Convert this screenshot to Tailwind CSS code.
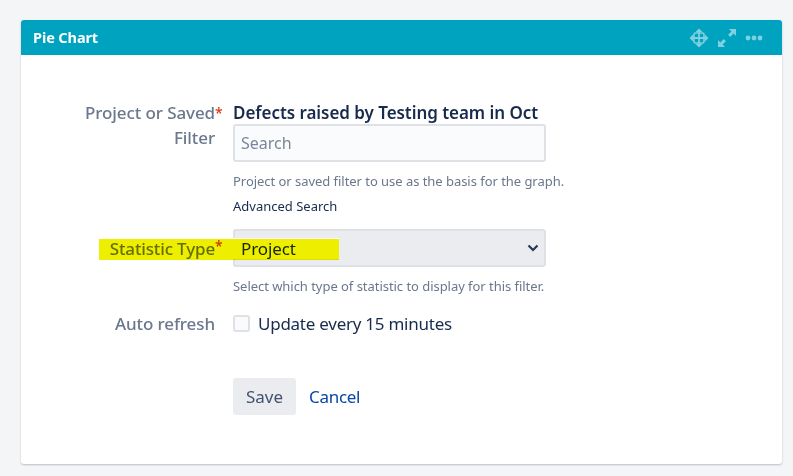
<!DOCTYPE html>
<html><head><meta charset="utf-8"><script src="https://cdn.jsdelivr.net/npm/@tailwindcss/browser@4"></script></head>
<body class="bg-[#f4f5f7] w-[793px] h-[476px] overflow-hidden relative font-['Noto_Sans',sans-serif]">
<div class="pt-5 pl-[21px] w-[782px]">
<div class="bg-white rounded-[3px] h-[444px] shadow-[0_1px_2px_rgba(9,30,66,0.25)]">
<div class="h-[35px] bg-[#00a3bf] rounded-t-[3px] flex items-center pl-3 pr-[19px] text-white">
<span class="text-[14.5px] font-bold tracking-[-0.1px]">Pie Chart</span>
<div class="ml-auto flex items-center gap-[8px] text-[#7fd1df]">
<svg width="20" height="20" viewBox="0 0 20 20" fill="none" stroke="currentColor" stroke-width="1.800"><path d="M10 3v14M3 10h14"/><path fill="currentColor" stroke="none" d="M10 0.500l3.500 3.500h-7zM10 19.500l3.500-3.500h-7zM0.500 10l3.500-3.500v7zM19.500 10l-3.500-3.500v7z"/><rect x="5" y="5" width="10" height="10" rx="1.500" stroke-width="1.600"/></svg>
<svg width="20" height="20" viewBox="0 0 20 20" fill="currentColor"><path d="M12 1h7v7l-2.400-2.400-3.300 3.300-2.200-2.200 3.300-3.300zM1 19v-7l2.400 2.400 3.300-3.300 2.200 2.200-3.300 3.300L8 19z"/></svg>
<svg width="18" height="6" viewBox="0 0 18 6" fill="currentColor"><circle cx="3" cy="3" r="2.400"/><circle cx="9" cy="3" r="2.400"/><circle cx="15" cy="3" r="2.400"/></svg>
</div>
</div>
<div class="pt-[46px] grid grid-cols-[194px_313px] gap-x-[18px] text-[17px] leading-[25px]">
<div class="-mt-[1px] text-right text-[#6b778c] font-medium tracking-[-0.1px]">Project or Saved<span class="text-[#de350b] absolute text-[14px]">*</span><br>Filter</div>
<div>
<div class="font-semibold text-[#172b4d] h-[24px] -mt-[1px] whitespace-nowrap tracking-[-0.05px]">Defects raised by Testing team in Oct</div>
<div class="h-[38px] border-2 border-[#dfe1e6] rounded-[3px] bg-[#fafbfc] flex items-center pl-[6px] text-[#7a869a] text-[16px]">Search</div>
<p class="mt-[9px] text-[13px] leading-[20px] text-[#6b778c] whitespace-nowrap tracking-[-0.04px]">Project or saved filter to use as the basis for the graph.</p>
<p class="mt-[5px] text-[13px] leading-[20px] text-[#172b4d] whitespace-nowrap">Advanced Search</p>
</div>
<div class="mt-[13px] text-right text-[#6b778c] font-medium tracking-[-0.15px] leading-[40px] h-[38px]">Statistic Type<span class="text-[#de350b] absolute text-[14px] leading-[34px]">*</span></div>
<div class="mt-[13px]">
<div class="relative h-[38px] border-2 border-[#dfe1e6] rounded-[3px] bg-[#ebecf0] flex items-center pl-[6px] pr-[5px] text-[#172b4d] tracking-[-0.1px]">
<span class="absolute left-[-2px] top-[7px] w-[106px] h-[21px] bg-white"></span>
<span class="relative">Project</span>
<svg class="ml-auto" width="12" height="8" viewBox="0 0 12 8" fill="none" stroke="#253858" stroke-width="2.200"><path d="M1.500 1.500L6 6l4.500-4.500"/></svg>
</div>
<p class="mt-[9px] text-[13px] leading-[20px] text-[#6b778c] whitespace-nowrap tracking-[-0.04px]">Select which type of statistic to display for this filter.</p>
</div>
<div class="mt-[15px] text-right text-[#6b778c] font-medium tracking-[-0.1px]">Auto refresh</div>
<div class="mt-[15px] flex items-center gap-2 text-[#172b4d] tracking-[-0.25px] whitespace-nowrap">
<span class="w-[17px] h-[17px] border-2 border-[#dfe1e6] rounded-[3px] bg-[#fafbfc]"></span>Update every 15 minutes</div>
<div></div>
<div class="mt-[42px] flex items-center">
<div class="w-[63px] h-[37px] bg-[#ebecf0] rounded-[3px] flex items-center justify-center text-[#42526e]">Save</div>
<span class="ml-[13px] text-[#0747a6] tracking-[-0.3px]">Cancel</span>
</div>
</div>
</div>
</div>
<div class="absolute left-[99px] top-[239px] w-[240px] h-[21px] bg-[#eeee00] mix-blend-multiply"></div>
</body></html>
